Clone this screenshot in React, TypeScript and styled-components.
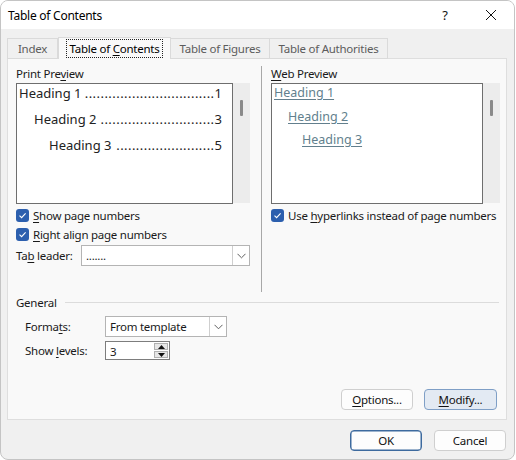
import styled, { createGlobalStyle } from "styled-components";

const GlobalStyle = createGlobalStyle`
  html, body {
    margin: 0;
    padding: 0;
    background: #ffffff;
  }
  body {
    font-family: "Noto Sans", "Segoe UI", sans-serif;
    font-size: 11.5px;
    letter-spacing: -0.25px;
    color: #1a1a1a;
  }
  * {
    box-sizing: border-box;
  }
`;

const Window = styled.div`
  width: 515px;
  height: 460px;
  display: flex;
  flex-direction: column;
  background: #f0f0f0;
  border: 1px solid #c4c4c4;
  border-radius: 8px;
  overflow: hidden;
`;

const TitleBar = styled.div`
  height: 28px;
  display: flex;
  align-items: center;
  background: #ffffff;
  padding-left: 7px;
`;

const Title = styled.div`
  flex: 1;
  font-size: 12px;
  color: #000;
`;

const CaptionButton = styled.div`
  width: 46px;
  height: 28px;
  display: flex;
  align-items: center;
  justify-content: center;
  font-size: 13px;
  color: #111;
`;

const Body = styled.div`
  flex: 1;
  display: flex;
  flex-direction: column;
  padding: 8px 7px 0 6px;
`;

const TabStrip = styled.div`
  display: flex;
  align-items: flex-end;
  height: 22px;
  margin-bottom: -1px;
`;

const Tab = styled.div<{ $width: number; $active?: boolean }>`
  width: ${(p) => p.$width}px;
  height: ${(p) => (p.$active ? 22 : 21)}px;
  display: flex;
  align-items: center;
  justify-content: center;
  background: ${(p) => (p.$active ? "#f9f9f9" : "#f0f0f0")};
  border: 1px solid #dadada;
  border-bottom: ${(p) => (p.$active ? "none" : "1px solid #dadada")};
  border-left: ${(p) => (p.$active ? "1px solid #dadada" : "none")};
  color: ${(p) => (p.$active ? "#000" : "#5c5c5c")};
  position: ${(p) => (p.$active ? "relative" : "static")};
  z-index: ${(p) => (p.$active ? 1 : 0)};
  padding-bottom: ${(p) => (p.$active ? 1 : 0)}px;
  &:first-child {
    border-left: 1px solid #dadada;
  }
`;

const FocusLabel = styled.span`
  outline: 1px dotted #222;
  padding: 0 3px;
  line-height: 17px;
`;

const Key = styled.span`
  text-decoration: underline;
  text-underline-offset: 2px;
`;

const Panel = styled.div`
  height: 362px;
  display: flex;
  flex-direction: column;
  background: #f9f9f9;
  border: 1px solid #dedede;
  padding: 7px 6px 9px 8px;
`;

const Columns = styled.div`
  display: flex;
  height: 226px;
`;

const Column = styled.div<{ $width: number }>`
  width: ${(p) => p.$width}px;
  display: flex;
  flex-direction: column;
`;

const Divider = styled.div`
  width: 1px;
  background: #a8a8a8;
  margin: 0 9px 0 11px;
`;

const SectionLabel = styled.div`
  height: 17px;
  line-height: 16px;
  color: #1a1a1a;
`;

const PreviewRow = styled.div`
  display: flex;
  height: 121px;
`;

const PreviewBox = styled.div<{ $width: number; $gap: number }>`
  width: ${(p) => p.$width}px;
  height: 121px;
  background: #ffffff;
  border: 1px solid #6e6e6e;
  padding: 0 10px 0 2px;
  display: flex;
  flex-direction: column;
  gap: ${(p) => p.$gap}px;
  letter-spacing: 0;
`;

const ScrollTrack = styled.div`
  width: 17px;
  height: 120px;
  background: #ececec;
  display: flex;
  justify-content: center;
  padding-top: 17px;
`;

const ScrollThumb = styled.div`
  width: 3px;
  height: 16px;
  background: #8a8a8a;
  border-radius: 1px;
`;

const TocLine = styled.div<{ $indent: number }>`
  display: flex;
  align-items: baseline;
  height: 18px;
  line-height: 18px;
  padding-left: ${(p) => p.$indent}px;
  font-size: 13px;
  color: #222;
  white-space: nowrap;
`;

const Leader = styled.span`
  flex: 1;
  text-align: right;
  letter-spacing: 0.45px;
`;

const WebLink = styled.div<{ $indent: number }>`
  height: 18px;
  line-height: 18px;
  padding-left: ${(p) => p.$indent}px;
  font-size: 12.5px;
  color: #627f8d;
  text-decoration: underline;
  text-underline-offset: 2px;
  white-space: nowrap;
`;

const CheckList = styled.div`
  margin-top: 2px;
  display: flex;
  flex-direction: column;
`;

const CheckRow = styled.div`
  height: 19px;
  display: flex;
  align-items: center;
  gap: 4px;
  white-space: nowrap;
`;

const CheckBox = styled.span`
  width: 13px;
  height: 13px;
  border-radius: 3px;
  background: #2c5fae;
  display: flex;
  align-items: center;
  justify-content: center;
`;

const FieldRow = styled.div<{ $top: number; $indent?: number }>`
  display: flex;
  align-items: center;
  margin-top: ${(p) => p.$top}px;
  padding-left: ${(p) => p.$indent ?? 0}px;
`;

const FieldLabel = styled.span<{ $width: number }>`
  width: ${(p) => p.$width}px;
  white-space: nowrap;
`;

const Select = styled.div<{ $width: number }>`
  width: ${(p) => p.$width}px;
  height: 21px;
  display: flex;
  background: #ffffff;
  border: 1px solid #b4b4b4;
`;

const SelectValue = styled.span`
  flex: 1;
  padding-left: 4px;
  line-height: 19px;
  white-space: nowrap;
`;

const SelectArrow = styled.span`
  width: 17px;
  border-left: 1px solid #cfcfcf;
  display: flex;
  align-items: center;
  justify-content: center;
`;

const GroupHeader = styled.div`
  margin-top: 2px;
  height: 16px;
  display: flex;
  align-items: center;
  gap: 8px;
  padding-right: 1px;
`;

const GroupLine = styled.div`
  flex: 1;
  height: 1px;
  background: #dcdcdc;
`;

const Spin = styled.div`
  width: 65px;
  height: 19px;
  display: flex;
  background: #ffffff;
  border: 1px solid #7d7d7d;
`;

const SpinButtons = styled.div`
  width: 16px;
  display: flex;
  flex-direction: column;
  padding: 1px;
  gap: 1px;
`;

const SpinButton = styled.div`
  flex: 1;
  background: #e6e6e6;
  border: 1px solid #b0b0b0;
  display: flex;
  align-items: center;
  justify-content: center;
`;

const ButtonRow = styled.div<{ $top: string; $right: number; $gap: number }>`
  display: flex;
  justify-content: flex-end;
  gap: ${(p) => p.$gap}px;
  margin-top: ${(p) => p.$top};
  margin-right: ${(p) => p.$right}px;
`;

const Button = styled.div<{ $width: number; $variant?: "hover" | "default" }>`
  width: ${(p) => p.$width}px;
  height: 21px;
  display: flex;
  align-items: center;
  justify-content: center;
  border-radius: 4px;
  background: ${(p) => (p.$variant === "hover" ? "#e3eaf3" : "#fdfdfd")};
  border: 1px solid
    ${(p) =>
      p.$variant === "hover"
        ? "#7f9fc6"
        : p.$variant === "default"
          ? "#3d6a9e"
          : "#cfcfcf"};
  box-shadow: ${(p) =>
    p.$variant === "default" ? "inset 0 0 0 0.5px #3d6a9e" : "none"};
  color: #111;
`;

const Check = () => (
  <CheckBox>
    <svg width="9" height="9" viewBox="0 0 9 9">
      <path d="M1.5 4.7 L3.6 6.7 L7.6 2.3" fill="none" stroke="#fff" strokeWidth="1.1" />
    </svg>
  </CheckBox>
);

const Chevron = () => (
  <svg width="9" height="6" viewBox="0 0 9 6">
    <path d="M0.5 0.8 L4.5 4.8 L8.5 0.8" fill="none" stroke="#606060" strokeWidth="1" />
  </svg>
);

const Triangle = ({ up }: { up?: boolean }) => (
  <svg width="7" height="4" viewBox="0 0 7 4">
    <path d={up ? "M0 4 L3.5 0 L7 4 Z" : "M0 0 L3.5 4 L7 0 Z"} fill="#111" />
  </svg>
);

const printEntries = [
  { name: "Heading 1", page: "1", indent: 0, dots: 33 },
  { name: "Heading 2", page: "3", indent: 15, dots: 29 },
  { name: "Heading 3", page: "5", indent: 30, dots: 25 },
];

const webEntries = [
  { name: "Heading 1", indent: 0 },
  { name: "Heading 2", indent: 14 },
  { name: "Heading 3", indent: 28 },
];

const App = () => {
  return (
    <>
      <GlobalStyle />
      <Window>
        <TitleBar>
          <Title>Table of Contents</Title>
          <CaptionButton>?</CaptionButton>
          <CaptionButton>
            <svg width="12" height="12" viewBox="0 0 12 12">
              <path d="M1 1 L11 11 M11 1 L1 11" stroke="#111" strokeWidth="1" />
            </svg>
          </CaptionButton>
        </TitleBar>
        <Body>
          <TabStrip>
            <Tab $width={51}>Index</Tab>
            <Tab $width={113} $active>
              <FocusLabel>
                Table of <Key>C</Key>ontents
              </FocusLabel>
            </Tab>
            <Tab $width={99}>Table of Figures</Tab>
            <Tab $width={118}>Table of Authorities</Tab>
          </TabStrip>
          <Panel>
            <Columns>
              <Column $width={234}>
                <SectionLabel>
                  Print Pre<Key>v</Key>iew
                </SectionLabel>
                <PreviewRow>
                  <PreviewBox $width={217} $gap={8}>
                    {printEntries.map((e) => (
                      <TocLine key={e.name} $indent={e.indent}>
                        <span>{e.name}</span>
                        <Leader>{".".repeat(e.dots)}</Leader>
                        <span>{e.page}</span>
                      </TocLine>
                    ))}
                  </PreviewBox>
                  <ScrollTrack>
                    <ScrollThumb />
                  </ScrollTrack>
                </PreviewRow>
                <CheckList>
                  <CheckRow>
                    <Check />
                    <span>
                      <Key>S</Key>how page numbers
                    </span>
                  </CheckRow>
                  <CheckRow>
                    <Check />
                    <span>
                      <Key>R</Key>ight align page numbers
                    </span>
                  </CheckRow>
                </CheckList>
                <FieldRow $top={1}>
                  <FieldLabel $width={65}>
                    Ta<Key>b</Key> leader:
                  </FieldLabel>
                  <Select $width={169}>
                    <SelectValue>.......</SelectValue>
                    <SelectArrow>
                      <Chevron />
                    </SelectArrow>
                  </Select>
                </FieldRow>
              </Column>
              <Divider />
              <Column $width={230}>
                <SectionLabel>
                  <Key>W</Key>eb Preview
                </SectionLabel>
                <PreviewRow>
                  <PreviewBox $width={212} $gap={5.5}>
                    {webEntries.map((e) => (
                      <WebLink key={e.name} $indent={e.indent}>
                        {e.name}
                      </WebLink>
                    ))}
                  </PreviewBox>
                  <ScrollTrack>
                    <ScrollThumb />
                  </ScrollTrack>
                </PreviewRow>
                <CheckList>
                  <CheckRow>
                    <Check />
                    <span>
                      Use <Key>h</Key>yperlinks instead of page numbers
                    </span>
                  </CheckRow>
                </CheckList>
              </Column>
            </Columns>
            <GroupHeader>
              <span>General</span>
              <GroupLine />
            </GroupHeader>
            <FieldRow $top={6} $indent={9}>
              <FieldLabel $width={80}>
                Forma<Key>t</Key>s:
              </FieldLabel>
              <Select $width={122}>
                <SelectValue>From template</SelectValue>
                <SelectArrow>
                  <Chevron />
                </SelectArrow>
              </Select>
            </FieldRow>
            <FieldRow $top={4} $indent={9}>
              <FieldLabel $width={80}>
                Show <Key>l</Key>evels:
              </FieldLabel>
              <Spin>
                <SelectValue>3</SelectValue>
                <SpinButtons>
                  <SpinButton>
                    <Triangle up />
                  </SpinButton>
                  <SpinButton>
                    <Triangle />
                  </SpinButton>
                </SpinButtons>
              </Spin>
            </FieldRow>
            <ButtonRow $top="auto" $right={3} $gap={11}>
              <Button $width={72}>
                <span>
                  <Key>O</Key>ptions...
                </span>
              </Button>
              <Button $width={73} $variant="hover">
                <span>
                  <Key>M</Key>odify...
                </span>
              </Button>
            </ButtonRow>
          </Panel>
          <ButtonRow $top="10px" $right={1} $gap={12}>
            <Button $width={72} $variant="default">
              OK
            </Button>
            <Button $width={72}>Cancel</Button>
          </ButtonRow>
        </Body>
      </Window>
    </>
  );
};

export default App;
